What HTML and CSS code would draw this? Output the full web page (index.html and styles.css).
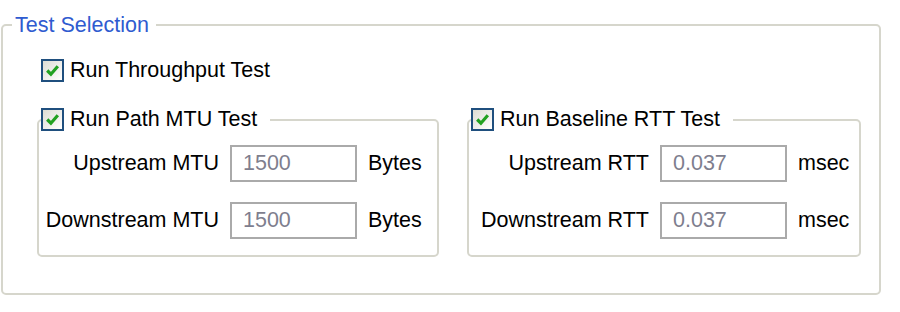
FILE: index.html
```html
<!DOCTYPE html>
<html>
  <head>
    <meta charset="utf-8">
    <title>Test Selection</title>
    <link rel="stylesheet" href="styles.css">
  </head>
  <body>
    <fieldset class="group outer">
      <legend class="title">Test Selection</legend>
      <label class="check-row">
        <span class="check"><svg viewBox="0 0 16 16"><path d="M3 8 L6.5 11.5 L13 4"/></svg></span>
        Run Throughput Test
      </label>
      <div class="subgroups">
        <fieldset class="group sub left">
          <legend class="check-legend">
            <span class="check"><svg viewBox="0 0 16 16"><path d="M3 8 L6.5 11.5 L13 4"/></svg></span>
            Run Path MTU Test
          </legend>
          <div class="fields">
            <span class="label">Upstream MTU</span>
            <span class="input">1500</span>
            <span class="unit">Bytes</span>
            <span class="label">Downstream MTU</span>
            <span class="input">1500</span>
            <span class="unit">Bytes</span>
          </div>
        </fieldset>
        <fieldset class="group sub right">
          <legend class="check-legend">
            <span class="check"><svg viewBox="0 0 16 16"><path d="M3 8 L6.5 11.5 L13 4"/></svg></span>
            Run Baseline RTT Test
          </legend>
          <div class="fields">
            <span class="label">Upstream RTT</span>
            <span class="input">0.037</span>
            <span class="unit">msec</span>
            <span class="label">Downstream RTT</span>
            <span class="input">0.037</span>
            <span class="unit">msec</span>
          </div>
        </fieldset>
      </div>
    </fieldset>
  </body>
</html>
```
FILE: styles.css
```css
body
{
    margin: 0;
    background-color: white;
    font-family: "Liberation Sans", Arial, sans-serif;
    font-size: 21.5px;
    color: #000;
}
.group
{
    box-sizing: border-box;
    border: 2px solid #d6d6cc;
    border-radius: 5px;
    margin: 0;
    padding: 0;
    min-width: 0;
}
.outer
{
    margin: 13px 0 0 1px;
    width: 880px;
    height: 282px;
    padding-top: 21px;
}
.title
{
    color: #2f5bd0;
    line-height: 24px;
    padding: 0 7px 0 3px;
    margin-left: 9px;
}
.check-row
{
    display: flex;
    align-items: center;
    gap: 6px;
    height: 24px;
    margin-left: 38px;
}
.check
{
    box-sizing: border-box;
    display: inline-flex;
    align-items: center;
    justify-content: center;
    width: 23px;
    height: 23px;
    border: 2px solid #1f4f7e;
    background: linear-gradient(135deg, #dcdcd4, #ffffff);
}
.check svg
{
    width: 17px;
    height: 17px;
}
.check path
{
    fill: none;
    stroke: #21a121;
    stroke-width: 3;
}
.subgroups
{
    display: grid;
    grid-template-columns: 402px 394px;
    column-gap: 28px;
    margin: 25px 0 0 34px;
}
.sub
{
    padding-top: 13px;
    padding-bottom: 16px;
}
.check-legend
{
    display: flex;
    align-items: center;
    gap: 6px;
    height: 25px;
    padding: 0 13px 0 0;
    margin-left: 2px;
}
.fields
{
    display: grid;
    grid-template-columns: 180px 127px auto;
    grid-auto-rows: 37px;
    column-gap: 11px;
    row-gap: 20px;
    align-items: center;
}
.label
{
    text-align: right;
    white-space: nowrap;
}
.input
{
    box-sizing: border-box;
    height: 37px;
    border: 2px solid #aaaaaa;
    padding-left: 11px;
    line-height: 33px;
    color: #7e7e8e;
}
```
